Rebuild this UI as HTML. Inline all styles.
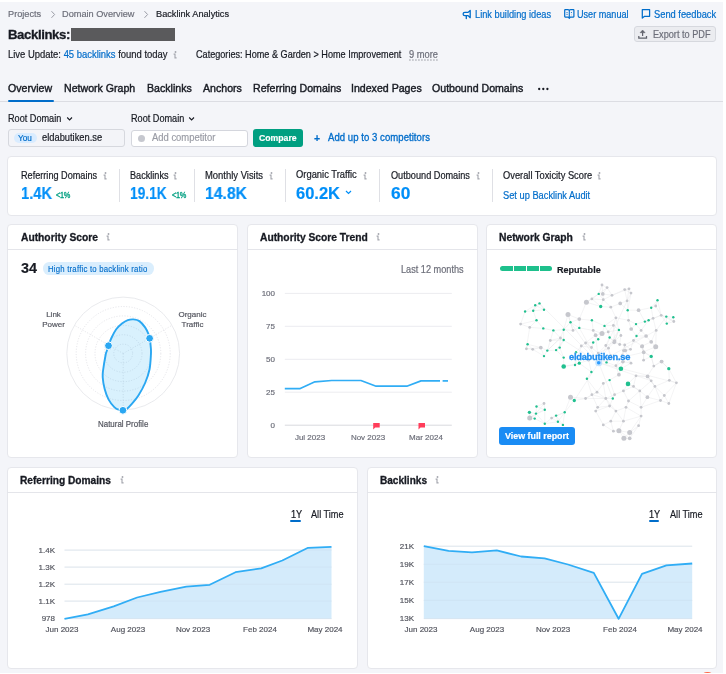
<!DOCTYPE html>
<html><head><meta charset="utf-8"><style>
html,body{margin:0;padding:0;background:#fff;width:726px;height:674px;overflow:hidden;position:relative}
body{font-family:"Liberation Sans",sans-serif;-webkit-font-smoothing:antialiased}
.t{position:absolute;line-height:1;white-space:nowrap;will-change:transform;-webkit-text-stroke-width:0.18px}
.a{position:absolute;overflow:visible}
.card{position:absolute;box-sizing:border-box;background:#fff;border:1px solid #e6e7ec;border-radius:4px}
</style></head><body>
<div style="position:absolute;left:0;top:2px;width:723px;height:671px;background:#f4f5f9"></div>
<div class="t" style="left:8.30px;top:10.00px;font-size:9.20px;color:#6c6e79;font-weight:normal;">Projects</div>
<svg class="a" style="left:50px;top:10px" width="6" height="9"><path d="M1.5 1.2L4.6 4.5L1.5 7.8" stroke="#9a9ca5" stroke-width="1" fill="none"/></svg>
<div class="t" style="left:62.00px;top:10.00px;font-size:9.20px;color:#6c6e79;font-weight:normal;">Domain Overview</div>
<svg class="a" style="left:142.5px;top:10px" width="6" height="9"><path d="M1.5 1.2L4.6 4.5L1.5 7.8" stroke="#9a9ca5" stroke-width="1" fill="none"/></svg>
<div class="t" style="left:155.50px;top:10.00px;font-size:9.20px;color:#171a22;font-weight:normal;">Backlink Analytics</div>
<div class="t" style="left:8.30px;top:28.00px;font-size:13.20px;color:#171a22;font-weight:bold;letter-spacing:-0.4px;-webkit-text-stroke-width:0.3px">Backlinks:</div>
<div style="position:absolute;left:71px;top:28px;width:104px;height:12.5px;background:#5a5a5c"></div>
<div class="t" style="left:8.30px;top:50.00px;font-size:9.45px;color:#171a22;font-weight:normal;;transform:scaleY(1.100);transform-origin:0 8px">Live Update: <span style="color:#006dca">45 backlinks</span> found today</div>
<svg class="a" style="left:173.40px;top:50.60px" width="5" height="8" viewBox="0 0 5 8"><circle cx="2.5" cy="1.0" r="0.95" fill="#a5a7af"/><path d="M0.6 3.1H2.0V6.9H3.6" fill="none" stroke="#a5a7af" stroke-width="1.15"/></svg>
<div class="t" style="left:195.70px;top:51.00px;font-size:9.12px;color:#171a22;font-weight:normal;;transform:scaleY(1.100);transform-origin:0 7px">Categories: Home &amp; Garden &gt; Home Improvement</div>
<div class="t" style="left:408.50px;top:51.00px;font-size:9.30px;color:#6c6e79;font-weight:normal;;transform:scaleY(1.100);transform-origin:0 7px">9 more</div>
<svg class="a" style="left:408.5px;top:59px" width="29" height="2"><path d="M0 1H29" stroke="#8d8f98" stroke-width="0.8" stroke-dasharray="1.8 1.2"/></svg>
<svg class="a" style="left:0;top:0" width="726" height="60"><path d="M470.2 10.4V17.7L468.1 15.6H464.9Q463.1 15.6 463.1 14Q463.1 12.4 464.9 12.4H468.1Z" fill="none" stroke="#006dca" stroke-width="1.3" stroke-linejoin="round"/><path d="M466.3 15.7V18.6" stroke="#006dca" stroke-width="1.35" stroke-linecap="round"/></svg>
<div class="t" style="left:474.70px;top:11.00px;font-size:9.25px;color:#006dca;font-weight:normal;;transform:scaleY(1.100);transform-origin:0 7px">Link building ideas</div>
<svg class="a" style="left:0;top:0" width="726" height="60"><path d="M565.2 9.7H568Q569.3 9.7 569.3 10.6Q569.3 9.7 570.6 9.7H573.4Q573.9 9.7 573.9 10.2V16.6Q573.9 17.1 573.4 17.1H570.2L569.3 18.3L568.4 17.1H565.2Q564.7 17.1 564.7 16.6V10.2Q564.7 9.7 565.2 9.7Z" fill="none" stroke="#006dca" stroke-width="1.2" stroke-linejoin="round"/><path d="M569.3 10.4V17.2" stroke="#006dca" stroke-width="1.1"/><path d="M566.1 12.6H568M566.1 14.4H568" stroke="#006dca" stroke-width="0.7" opacity="0.8"/><circle cx="571.4" cy="12.5" r="0.6" fill="#006dca"/><path d="M571.4 13.8V15.6" stroke="#006dca" stroke-width="0.5" opacity="0.5"/></svg>
<div class="t" style="left:576.90px;top:11.00px;font-size:9.10px;color:#006dca;font-weight:normal;;transform:scaleY(1.100);transform-origin:0 7px">User manual</div>
<svg class="a" style="left:0;top:0" width="726" height="60"><path d="M642.3 9.6H649.6V16.3H644.6L642.3 18.1Z" fill="none" stroke="#006dca" stroke-width="1.25" stroke-linejoin="round"/></svg>
<div class="t" style="left:653.70px;top:11.00px;font-size:9.32px;color:#006dca;font-weight:normal;;transform:scaleY(1.100);transform-origin:0 7px">Send feedback</div>
<div style="position:absolute;left:633.5px;top:25.7px;width:82.4px;height:16.8px;box-sizing:border-box;border:1px solid #d6d8de;border-radius:3px;background:#ebecf0"></div>
<svg class="a" style="left:0;top:0" width="726" height="60"><path d="M642.6 30L640.1 32.7H645.1Z" fill="#5f616b" stroke="#5f616b" stroke-width="0.5" stroke-linejoin="round"/><path d="M642.6 32.4V35.9" stroke="#5f616b" stroke-width="1.2"/><path d="M638.8 36.1V38H646.5V36.1" fill="none" stroke="#5f616b" stroke-width="1.25"/></svg>
<div class="t" style="left:652.80px;top:31.00px;font-size:9.16px;color:#6c6e79;font-weight:normal;;transform:scaleY(1.100);transform-origin:0 7px">Export to PDF</div>
<div class="t" style="left:8.40px;top:83.00px;font-size:10.60px;color:#171a22;font-weight:normal;-webkit-text-stroke:0.4px #171a22">Overview</div>
<div class="t" style="left:63.90px;top:83.00px;font-size:10.60px;color:#171a22;font-weight:normal;-webkit-text-stroke:0.4px #171a22">Network Graph</div>
<div class="t" style="left:146.70px;top:83.00px;font-size:10.60px;color:#171a22;font-weight:normal;-webkit-text-stroke:0.4px #171a22">Backlinks</div>
<div class="t" style="left:202.70px;top:83.00px;font-size:10.60px;color:#171a22;font-weight:normal;-webkit-text-stroke:0.4px #171a22">Anchors</div>
<div class="t" style="left:252.50px;top:83.00px;font-size:10.60px;color:#171a22;font-weight:normal;-webkit-text-stroke:0.4px #171a22">Referring Domains</div>
<div class="t" style="left:351.20px;top:83.00px;font-size:10.60px;color:#171a22;font-weight:normal;-webkit-text-stroke:0.4px #171a22">Indexed Pages</div>
<div class="t" style="left:431.90px;top:83.00px;font-size:10.60px;color:#171a22;font-weight:normal;-webkit-text-stroke:0.4px #171a22">Outbound Domains</div>
<svg class="a" style="left:537px;top:86.5px" width="13" height="4"><circle cx="2.2" cy="2" r="1.15" fill="#171a22"/><circle cx="6.3" cy="2" r="1.15" fill="#171a22"/><circle cx="10.4" cy="2" r="1.15" fill="#171a22"/></svg>
<div style="position:absolute;left:0;top:101px;width:723px;height:1px;background:#dcdde3"></div>
<div style="position:absolute;left:8px;top:99.6px;width:46px;height:2px;background:#006dca;border-radius:1px"></div>
<div class="t" style="left:8.40px;top:115.00px;font-size:9.15px;color:#171a22;font-weight:normal;;transform:scaleY(1.100);transform-origin:0 7px">Root Domain</div>
<svg class="a" style="left:65.5px;top:115.5px" width="8" height="6"><path d="M1.2 1.5L3.6 3.9L6 1.5" stroke="#171a22" stroke-width="1.1" fill="none"/></svg>
<div class="t" style="left:131.00px;top:115.00px;font-size:9.15px;color:#171a22;font-weight:normal;;transform:scaleY(1.100);transform-origin:0 7px">Root Domain</div>
<svg class="a" style="left:188px;top:115.5px" width="8" height="6"><path d="M1.2 1.5L3.6 3.9L6 1.5" stroke="#171a22" stroke-width="1.1" fill="none"/></svg>
<div style="position:absolute;left:8.2px;top:129px;width:116.8px;height:17.5px;box-sizing:border-box;border:1px solid #d6d8de;border-radius:3px;background:#f3f4f8"></div>
<div style="position:absolute;left:13.7px;top:133.2px;width:23.3px;height:9.5px;border-radius:5px;background:#d9ecff"></div>
<div class="t" style="left:17.50px;top:135.00px;font-size:8.20px;color:#006dca;font-weight:normal;;transform:scaleY(1.100);transform-origin:0 6px">You</div>
<div class="t" style="left:42.30px;top:134.00px;font-size:9.33px;color:#171a22;font-weight:normal;;transform:scaleY(1.100);transform-origin:0 7px">eldabutiken.se</div>
<div style="position:absolute;left:130.5px;top:129.5px;width:117px;height:17px;box-sizing:border-box;border:1px solid #d4d6dd;border-radius:3px;background:#fff"></div>
<div style="position:absolute;left:137.5px;top:134.5px;width:7px;height:7px;border-radius:50%;background:#c6c8cf"></div>
<div class="t" style="left:152.00px;top:133.00px;font-size:9.43px;color:#9a9ca5;font-weight:normal;;transform:scaleY(1.100);transform-origin:0 8px">Add competitor</div>
<div style="position:absolute;left:253px;top:129.3px;width:49.8px;height:17.3px;border-radius:3px;background:#009f81"></div>
<div class="t" style="left:259.30px;top:134.00px;font-size:8.70px;color:#fff;font-weight:bold;">Compare</div>
<div class="t" style="left:313.80px;top:133.00px;font-size:10.50px;color:#006dca;font-weight:bold;">+</div>
<div class="t" style="left:328.00px;top:133.00px;font-size:9.55px;color:#006dca;font-weight:normal;-webkit-text-stroke:0.3px #006dca;letter-spacing:0.05px;transform:scaleY(1.100);transform-origin:0 8px">Add up to 3 competitors</div>
<div class="card" style="left:7px;top:156px;width:710px;height:60px"></div>
<div class="t" style="left:20.70px;top:172.00px;font-size:9.15px;color:#171a22;font-weight:normal;;transform:scaleY(1.100);transform-origin:0 7px">Referring Domains</div>
<svg class="a" style="left:102.60px;top:171.90px" width="5" height="8" viewBox="0 0 5 8"><circle cx="2.5" cy="1.0" r="0.95" fill="#a5a7af"/><path d="M0.6 3.1H2.0V6.9H3.6" fill="none" stroke="#a5a7af" stroke-width="1.15"/></svg>
<div class="t" style="left:20.70px;top:184.92px;font-size:16.50px;color:#008ff8;font-weight:bold;transform:scaleX(0.8896);transform-origin:0 0">1.4K</div>
<div class="t" style="left:130.00px;top:172.00px;font-size:9.15px;color:#171a22;font-weight:normal;;transform:scaleY(1.100);transform-origin:0 7px">Backlinks</div>
<svg class="a" style="left:172.90px;top:171.90px" width="5" height="8" viewBox="0 0 5 8"><circle cx="2.5" cy="1.0" r="0.95" fill="#a5a7af"/><path d="M0.6 3.1H2.0V6.9H3.6" fill="none" stroke="#a5a7af" stroke-width="1.15"/></svg>
<div class="t" style="left:130.00px;top:184.92px;font-size:16.50px;color:#008ff8;font-weight:bold;transform:scaleX(0.8337);transform-origin:0 0">19.1K</div>
<div class="t" style="left:204.60px;top:171.00px;font-size:9.45px;color:#171a22;font-weight:normal;;transform:scaleY(1.100);transform-origin:0 8px">Monthly Visits</div>
<svg class="a" style="left:268.60px;top:171.90px" width="5" height="8" viewBox="0 0 5 8"><circle cx="2.5" cy="1.0" r="0.95" fill="#a5a7af"/><path d="M0.6 3.1H2.0V6.9H3.6" fill="none" stroke="#a5a7af" stroke-width="1.15"/></svg>
<div class="t" style="left:204.60px;top:184.92px;font-size:16.50px;color:#008ff8;font-weight:bold;transform:scaleX(0.9541);transform-origin:0 0">14.8K</div>
<div class="t" style="left:296.00px;top:171.00px;font-size:9.38px;color:#171a22;font-weight:normal;;transform:scaleY(1.100);transform-origin:0 8px">Organic Traffic</div>
<svg class="a" style="left:362.90px;top:171.90px" width="5" height="8" viewBox="0 0 5 8"><circle cx="2.5" cy="1.0" r="0.95" fill="#a5a7af"/><path d="M0.6 3.1H2.0V6.9H3.6" fill="none" stroke="#a5a7af" stroke-width="1.15"/></svg>
<div class="t" style="left:296.00px;top:184.92px;font-size:16.50px;color:#008ff8;font-weight:bold;transform:scaleX(0.9995);transform-origin:0 0">60.2K</div>
<div class="t" style="left:390.70px;top:172.00px;font-size:9.17px;color:#171a22;font-weight:normal;;transform:scaleY(1.100);transform-origin:0 7px">Outbound Domains</div>
<svg class="a" style="left:475.90px;top:171.90px" width="5" height="8" viewBox="0 0 5 8"><circle cx="2.5" cy="1.0" r="0.95" fill="#a5a7af"/><path d="M0.6 3.1H2.0V6.9H3.6" fill="none" stroke="#a5a7af" stroke-width="1.15"/></svg>
<div class="t" style="left:390.70px;top:184.92px;font-size:16.50px;color:#008ff8;font-weight:bold;transform:scaleX(1.0519);transform-origin:0 0">60</div>
<div style="position:absolute;left:119.2px;top:169px;width:1px;height:32.5px;background:#dfe0e5"></div>
<div style="position:absolute;left:194.2px;top:169px;width:1px;height:32.5px;background:#dfe0e5"></div>
<div style="position:absolute;left:285.2px;top:169px;width:1px;height:32.5px;background:#dfe0e5"></div>
<div style="position:absolute;left:379.2px;top:169px;width:1px;height:32.5px;background:#dfe0e5"></div>
<div style="position:absolute;left:492.2px;top:169px;width:1px;height:32.5px;background:#dfe0e5"></div>
<div class="t" style="left:56.00px;top:192.00px;font-size:7.40px;color:#009f81;font-weight:normal;-webkit-text-stroke:0.3px #009f81;letter-spacing:-0.35px;transform:scaleY(1.100);transform-origin:0 6px">&lt;1%</div>
<div class="t" style="left:171.50px;top:192.00px;font-size:7.40px;color:#009f81;font-weight:normal;-webkit-text-stroke:0.3px #009f81;letter-spacing:-0.35px;transform:scaleY(1.100);transform-origin:0 6px">&lt;1%</div>
<svg class="a" style="left:344.5px;top:190px" width="7" height="5"><path d="M1 1L3.5 3.5L6 1" stroke="#008ff8" stroke-width="1.2" fill="none"/></svg>
<div class="t" style="left:503.00px;top:172.00px;font-size:9.30px;color:#171a22;font-weight:normal;;transform:scaleY(1.100);transform-origin:0 7px">Overall Toxicity Score</div>
<svg class="a" style="left:597.40px;top:171.90px" width="5" height="8" viewBox="0 0 5 8"><circle cx="2.5" cy="1.0" r="0.95" fill="#a5a7af"/><path d="M0.6 3.1H2.0V6.9H3.6" fill="none" stroke="#a5a7af" stroke-width="1.15"/></svg>
<div class="t" style="left:503.00px;top:192.00px;font-size:9.29px;color:#006dca;font-weight:normal;;transform:scaleY(1.100);transform-origin:0 7px">Set up Backlink Audit</div>
<div class="card" style="left:7px;top:224px;width:231px;height:234px"></div>
<div style="position:absolute;left:7px;top:249.0px;width:231px;height:1px;background:#e4e5ea"></div>
<div class="t" style="left:20.60px;top:233.00px;font-size:10.27px;color:#171a22;font-weight:bold;-webkit-text-stroke:0.3px #171a22">Authority Score</div>
<svg class="a" style="left:106.40px;top:233.10px" width="5" height="8" viewBox="0 0 5 8"><circle cx="2.5" cy="1.0" r="0.95" fill="#a5a7af"/><path d="M0.6 3.1H2.0V6.9H3.6" fill="none" stroke="#a5a7af" stroke-width="1.15"/></svg>
<div class="card" style="left:247px;top:224px;width:231px;height:234px"></div>
<div style="position:absolute;left:247px;top:249.0px;width:231px;height:1px;background:#e4e5ea"></div>
<div class="t" style="left:260.20px;top:233.00px;font-size:10.27px;color:#171a22;font-weight:bold;-webkit-text-stroke:0.3px #171a22">Authority Score Trend</div>
<svg class="a" style="left:376.40px;top:233.10px" width="5" height="8" viewBox="0 0 5 8"><circle cx="2.5" cy="1.0" r="0.95" fill="#a5a7af"/><path d="M0.6 3.1H2.0V6.9H3.6" fill="none" stroke="#a5a7af" stroke-width="1.15"/></svg>
<div class="card" style="left:486px;top:224px;width:231px;height:234px"></div>
<div style="position:absolute;left:486px;top:249.0px;width:231px;height:1px;background:#e4e5ea"></div>
<div class="t" style="left:499.40px;top:233.00px;font-size:10.30px;color:#171a22;font-weight:bold;-webkit-text-stroke:0.3px #171a22">Network Graph</div>
<svg class="a" style="left:581.90px;top:233.10px" width="5" height="8" viewBox="0 0 5 8"><circle cx="2.5" cy="1.0" r="0.95" fill="#a5a7af"/><path d="M0.6 3.1H2.0V6.9H3.6" fill="none" stroke="#a5a7af" stroke-width="1.15"/></svg>
<div class="card" style="left:7px;top:467px;width:351px;height:202px"></div>
<div style="position:absolute;left:7px;top:492.0px;width:351px;height:1px;background:#e4e5ea"></div>
<div class="t" style="left:20.30px;top:476.00px;font-size:10.17px;color:#171a22;font-weight:bold;-webkit-text-stroke:0.3px #171a22">Referring Domains</div>
<svg class="a" style="left:119.90px;top:476.10px" width="5" height="8" viewBox="0 0 5 8"><circle cx="2.5" cy="1.0" r="0.95" fill="#a5a7af"/><path d="M0.6 3.1H2.0V6.9H3.6" fill="none" stroke="#a5a7af" stroke-width="1.15"/></svg>
<div class="card" style="left:367px;top:467px;width:350px;height:202px"></div>
<div style="position:absolute;left:367px;top:492.0px;width:350px;height:1px;background:#e4e5ea"></div>
<div class="t" style="left:379.50px;top:476.00px;font-size:10.07px;color:#171a22;font-weight:bold;-webkit-text-stroke:0.3px #171a22">Backlinks</div>
<svg class="a" style="left:435.40px;top:476.10px" width="5" height="8" viewBox="0 0 5 8"><circle cx="2.5" cy="1.0" r="0.95" fill="#a5a7af"/><path d="M0.6 3.1H2.0V6.9H3.6" fill="none" stroke="#a5a7af" stroke-width="1.15"/></svg>
<div class="t" style="left:21.00px;top:261.00px;font-size:14.40px;color:#171a22;font-weight:bold;">34</div>
<div style="position:absolute;left:42.5px;top:262.4px;width:111px;height:12.6px;border-radius:6.3px;background:#daeefd"></div>
<div class="t" style="left:48.00px;top:266.00px;font-size:7.80px;color:#006dca;font-weight:normal;-webkit-text-stroke:0.12px #006dca;letter-spacing:0.2px;transform:scaleY(1.100);transform-origin:0 6px">High traffic to backlink ratio</div>
<svg class="a" style="left:0;top:0" width="726" height="674"><circle cx="123.2" cy="353.5" r="56.4" fill="none" stroke="#e3e4e8" stroke-width="0.8"/><circle cx="123.2" cy="353.5" r="9.4" fill="none" stroke="#d3d4da" stroke-width="0.6" stroke-dasharray="1.1 1.6"/><circle cx="123.2" cy="353.5" r="18.8" fill="none" stroke="#d3d4da" stroke-width="0.6" stroke-dasharray="1.1 1.6"/><circle cx="123.2" cy="353.5" r="28.2" fill="none" stroke="#d3d4da" stroke-width="0.6" stroke-dasharray="1.1 1.6"/><circle cx="123.2" cy="353.5" r="37.6" fill="none" stroke="#d3d4da" stroke-width="0.6" stroke-dasharray="1.1 1.6"/><circle cx="123.2" cy="353.5" r="47.0" fill="none" stroke="#d3d4da" stroke-width="0.6" stroke-dasharray="1.1 1.6"/><path d="M123.2 353.5L74.4 325.3" stroke="#d3d4da" stroke-width="0.6" stroke-dasharray="1.1 1.6"/><path d="M123.2 353.5L172.0 325.3" stroke="#d3d4da" stroke-width="0.6" stroke-dasharray="1.1 1.6"/><path d="M123.2 353.5L123.2 409.9" stroke="#d3d4da" stroke-width="0.6" stroke-dasharray="1.1 1.6"/><path d="M108.50 345.70 C109.30 343.45 110.12 340.73 111.40 338.00 C112.68 335.27 114.43 331.72 116.20 329.30 C117.97 326.88 120.07 325.03 122.00 323.50 C123.93 321.97 125.87 320.78 127.80 320.10 C129.73 319.42 131.67 319.23 133.60 319.40 C135.53 319.57 137.48 319.77 139.40 321.10 C141.32 322.43 143.58 325.23 145.10 327.40 C146.62 329.57 147.72 332.22 148.50 334.10 C149.28 335.98 149.40 336.28 149.80 338.70 C150.20 341.12 150.72 345.88 150.90 348.60 C151.08 351.32 151.13 351.52 150.90 355.00 C150.67 358.48 150.47 364.83 149.50 369.50 C148.53 374.17 146.95 378.67 145.10 383.00 C143.25 387.33 140.65 391.97 138.40 395.50 C136.15 399.03 133.53 401.95 131.60 404.20 C129.67 406.45 128.23 407.97 126.80 409.00 C125.37 410.03 124.28 410.23 123.00 410.40 C121.72 410.57 120.55 410.55 119.10 410.00 C117.65 409.45 116.07 408.87 114.30 407.10 C112.53 405.33 110.12 402.45 108.50 399.40 C106.88 396.35 105.57 392.50 104.60 388.80 C103.63 385.10 102.93 380.42 102.70 377.20 C102.47 373.98 102.72 373.20 103.20 369.50 C103.68 365.80 105.03 358.00 105.60 355.00 C106.17 352.00 106.12 353.05 106.60 351.50 C107.08 349.95 107.70 347.95 108.50 345.70Z" fill="#2bb0f5" fill-opacity="0.18" stroke="#2aa7f2" stroke-width="1.9"/><circle cx="108.5" cy="345.7" r="3.9" fill="#2aa7f2" stroke="#fff" stroke-width="1"/><circle cx="149.6" cy="338.3" r="3.9" fill="#2aa7f2" stroke="#fff" stroke-width="1"/><circle cx="122.9" cy="410.3" r="3.9" fill="#2aa7f2" stroke="#fff" stroke-width="1"/></svg>
<div class="t" style="left:33px;top:309.8px;width:41px;text-align:center;font-size:8px;line-height:10.2px;color:#53555e">Link<br>Power</div>
<div class="t" style="left:172px;top:309.8px;width:41px;text-align:center;font-size:8px;line-height:10.2px;color:#53555e">Organic<br>Traffic</div>
<div class="t" style="left:97.50px;top:421.00px;font-size:7.94px;color:#53555e;font-weight:normal;;transform:scaleY(1.100);transform-origin:0 6px">Natural Profile</div>
<svg class="a" style="left:0;top:0" width="726" height="674"><path d="M284.8 293.4H451.8" stroke="#ececf0" stroke-width="1"/><path d="M284.8 326.3H451.8" stroke="#ececf0" stroke-width="1"/><path d="M284.8 359.3H451.8" stroke="#ececf0" stroke-width="1"/><path d="M284.8 392.2H451.8" stroke="#ececf0" stroke-width="1"/><path d="M284.8 425.2H451.8" stroke="#d8d9de" stroke-width="1"/><path d="M284.8 388.7L299.7 388.7L314.9 381.8L331.7 380.5L360.9 380.5L376.1 386.2L406.8 386.2L421.0 380.9L440.0 380.9" fill="none" stroke="#30adf5" stroke-width="1.7" stroke-linejoin="round"/><path d="M442.6 380.9H448" stroke="#30adf5" stroke-width="1.7"/><path d="M373.2 423.1H379.7V427.6H375.2L373.2 429.5Z" fill="#ff3d5a"/><path d="M418.5 423.1H425.0V427.6H420.5L418.5 429.5Z" fill="#ff3d5a"/></svg>
<div class="t" style="left:244.7px;width:30px;text-align:right;top:290.40px;font-size:8px;color:#6c6e79">100</div>
<div class="t" style="left:244.7px;width:30px;text-align:right;top:323.30px;font-size:8px;color:#6c6e79">75</div>
<div class="t" style="left:244.7px;width:30px;text-align:right;top:356.30px;font-size:8px;color:#6c6e79">50</div>
<div class="t" style="left:244.7px;width:30px;text-align:right;top:389.20px;font-size:8px;color:#6c6e79">25</div>
<div class="t" style="left:244.7px;width:30px;text-align:right;top:422.20px;font-size:8px;color:#6c6e79">0</div>
<div class="t" style="left:401.40px;top:266.00px;font-size:9.17px;color:#6c6e79;font-weight:normal;;transform:scaleY(1.100);transform-origin:0 7px">Last 12 months</div>
<div class="t" style="left:280.2px;width:60px;text-align:center;top:433.50px;font-size:8px;color:#6c6e79">Jul 2023</div>
<div class="t" style="left:337.8px;width:60px;text-align:center;top:433.50px;font-size:8px;color:#6c6e79">Nov 2023</div>
<div class="t" style="left:395.5px;width:60px;text-align:center;top:433.50px;font-size:8px;color:#6c6e79">Mar 2024</div>
<div style="position:absolute;left:499.7px;top:266.2px;width:52.6px;height:5.2px;border-radius:2.6px;background:#1ec08c"></div>
<div style="position:absolute;left:512.9px;top:266px;width:0.8px;height:5.6px;background:#fff"></div>
<div style="position:absolute;left:526.0px;top:266px;width:0.8px;height:5.6px;background:#fff"></div>
<div style="position:absolute;left:539.2px;top:266px;width:0.8px;height:5.6px;background:#fff"></div>
<div class="t" style="left:557.30px;top:266.00px;font-size:9.04px;color:#171a22;font-weight:bold;">Reputable</div>
<svg class="a" style="left:0;top:0" width="726" height="674"><path d="M591.9 298.9L603.3 299.7M543.3 328.4L553.4 330.4M612.8 398.5L605.8 398.5M626.0 407.3L623.4 421.2M615.9 365.7L622.9 361.6M574.3 400.5L564.7 412.3M633.5 386.4L639.8 390.9M568.0 314.5L579.3 319.1M620.9 335.5L619.7 344.5M539.5 303.4L544.0 309.7M644.9 321.6L653.1 318.3M648.6 320.3L641.1 330.4M591.9 320.3L579.3 319.1M624.7 345.0L623.4 350.6M627.7 310.2L620.2 303.4M609.6 380.1L603.3 383.4M655.7 306.0L661.2 315.3M647.4 376.3L636.0 375.8M626.0 407.3L628.5 401.0M646.1 336.0L651.2 341.8M618.9 329.9L615.9 317.8M651.2 341.8L642.3 346.0M651.2 307.7L655.7 306.0M591.4 372.0L588.6 360.2M666.3 316.6L673.3 317.3M600.7 306.5L591.9 298.9M603.3 424.9L595.7 411.1M612.8 398.5L609.6 406.0M534.7 418.6L544.8 423.7M622.2 355.1L623.4 350.6M581.3 346.0L591.5 347.5M593.2 342.5L591.5 347.5M626.0 407.3L641.1 416.1M614.6 394.7L605.8 398.5M609.6 337.5L614.6 341.0M604.5 325.9L608.2 331.9M636.5 336.0L631.2 329.0M618.9 329.9L620.9 335.5M624.7 289.6L631.0 293.1M597.0 392.2L585.6 398.5M539.5 303.4L533.2 310.8M629.0 288.8L627.1 300.8M606.5 362.4L598.2 353.1M593.2 342.5L585.6 343.0M575.0 365.0L563.7 366.5M610.8 355.6L608.5 348.2M603.3 383.4L597.0 392.2M622.2 355.1L631.0 363.2M557.9 421.7L551.6 418.1M651.2 307.7L638.6 310.2M654.9 386.4L669.3 380.3M600.7 306.5L586.4 302.2M603.3 424.9L610.8 421.2M628.0 383.9L623.4 390.9M651.2 356.4L655.7 346.8M629.7 432.5L629.7 438.3M609.6 380.1L618.9 374.7M629.7 438.3L638.6 425.7M535.2 305.2L539.5 303.4M655.7 346.8L643.6 351.8M624.7 289.6L629.0 288.8M647.4 397.2L641.1 407.3M615.9 411.1L610.8 421.2M576.0 352.3L575.0 365.0M575.0 365.0L579.3 363.2M603.3 299.7L610.8 307.2M598.2 353.1L591.5 347.5M619.7 344.5L614.2 342.3M610.8 307.2L620.2 303.4M613.4 325.4L615.9 317.8M639.8 390.9L647.4 397.2M636.5 336.0L633.5 340.5M556.1 350.1L563.7 357.6M598.7 293.9L602.8 293.9M563.7 329.7L570.5 322.3M597.7 407.3L595.7 411.1M651.2 380.8L647.6 376.4M570.5 322.3L579.3 319.1M602.0 333.4L595.6 335.2M647.4 397.2L654.9 386.4M560.4 338.0L550.3 340.5M602.8 293.9L603.3 299.7M536.5 406.5L536.0 413.6M605.8 345.5L614.2 342.3M661.2 361.4L653.8 366.1M598.7 293.9L602.0 285.0M597.7 407.3L605.8 398.5M553.4 330.4L550.3 340.5M570.5 397.2L585.6 398.5M615.9 411.1L623.4 421.2M553.4 330.4L563.7 329.7M673.3 317.3L673.8 321.5M536.5 320.3L529.7 327.4M540.8 347.6L526.4 348.8M651.2 356.4L643.7 352.3M527.6 344.3L532.7 349.3M563.7 340.0L560.4 338.0M570.5 322.3L568.0 314.5M520.6 324.1L529.7 327.4M602.0 333.4L608.2 331.9M556.1 415.6L557.9 421.7M536.0 413.6L529.7 417.9M533.2 310.8L536.5 320.3M630.5 349.3L623.4 350.6M579.3 363.2L588.6 360.2M644.9 321.6L638.6 310.2M627.7 310.2L628.5 320.3M529.4 412.3L536.0 413.6M605.8 345.5L608.5 348.2M673.3 317.3L666.8 323.6M636.0 324.1L641.1 330.4M598.7 293.9L603.3 299.7M664.3 395.5L660.5 400.5M553.4 330.4L560.4 338.0M646.1 336.0L656.2 330.4M661.2 315.3L653.1 318.3M544.8 423.7L557.9 421.7M609.6 337.5L614.2 342.3M628.0 383.9L639.8 390.9M603.3 424.9L613.4 431.2M604.5 325.9L613.4 325.4M557.9 421.7L562.9 424.9M598.2 353.1L605.8 345.5M624.7 345.0L625.2 350.5M547.3 350.6L556.1 350.1M536.5 320.3L520.6 324.1M540.8 347.6L532.7 349.3M527.6 344.3L540.8 347.6M556.1 350.1L559.7 347.6M586.9 378.8L591.9 394.7M579.3 363.2L591.4 372.0M623.4 350.6L625.2 350.5M620.9 368.7L622.9 361.6M654.9 386.4L651.2 380.8M536.0 413.6L544.0 403.5M533.2 310.8L544.0 309.7M643.6 351.8L643.6 360.2M618.9 430.7L629.7 438.3M622.2 355.1L625.2 350.5M668.8 368.7L661.2 361.4M666.8 323.6L661.2 315.3M668.8 368.7L676.4 382.8M631.0 363.2L622.9 361.6M657.5 300.2L655.7 306.0M598.2 339.2L595.6 335.2M646.1 336.0L641.1 330.4M664.3 395.5L676.4 382.8M563.7 357.6L563.7 366.5M607.1 287.6L612.0 295.3M570.5 322.3L573.0 330.4M648.6 320.3L653.1 318.3M624.7 345.0L633.5 340.5M647.4 376.3L651.2 380.8M604.5 325.9L602.0 333.4M624.7 345.0L619.7 344.5M631.0 293.1L627.1 300.8M615.9 365.7L618.9 374.7M629.0 288.8L631.0 293.1M591.9 394.7L585.6 398.5M525.1 311.5L533.2 310.8M642.3 346.0L643.7 352.3M642.3 346.0L641.9 346.5M579.3 363.2L563.7 366.5M618.9 430.7L629.7 432.5M636.5 336.0L646.1 336.0M570.5 322.3L579.3 327.9M597.0 392.2L605.8 398.5M618.9 329.9L608.2 331.9M614.6 341.0L614.2 342.3M676.4 382.8L668.8 403.5M644.9 321.6L648.6 320.3M591.9 394.7L597.7 407.3M623.4 390.9L628.5 401.0M588.6 360.2L598.2 353.1M654.9 386.4L664.3 395.5M609.6 406.0L595.7 411.1M636.0 375.8L647.6 376.4M628.0 383.9L636.0 375.8M585.6 343.0L591.5 347.5M618.9 430.7L623.9 438.3M613.4 431.2L610.8 421.2M608.5 348.2L614.2 342.3M609.6 406.0L597.7 407.3M564.7 412.3L562.9 424.9M647.4 397.2L660.5 400.5M614.6 341.0L619.7 344.5M536.0 413.6L544.8 409.8M609.6 406.0L605.8 398.5M525.1 311.5L520.6 324.1M606.5 362.4L610.8 355.6M600.7 306.5L610.8 307.2M563.7 340.0L559.7 347.6M651.2 356.4L643.6 351.8M607.1 287.6L602.8 293.9M666.3 316.6L673.8 321.5M535.2 305.2L544.0 309.7M563.7 329.7L563.7 340.0M593.2 342.5L598.2 339.2M559.7 347.6L563.7 357.6M643.7 352.3L641.9 346.5M579.3 327.9L579.3 319.1M657.5 300.2L661.2 315.3M606.5 362.4L615.9 365.7M636.0 324.1L644.9 321.6M627.7 310.2L638.6 310.2M641.1 407.3L628.5 401.0M630.5 349.3L625.2 350.5M666.3 316.6L661.2 315.3M614.6 394.7L623.4 390.9M626.0 407.3L615.9 411.1M536.5 406.5L544.0 403.5M643.6 351.8L643.7 352.3M613.4 325.4L608.2 331.9M620.2 303.4L627.1 300.8M614.6 341.0L620.9 335.5M547.3 350.6L540.8 347.6M564.7 412.3L557.9 421.7M636.0 324.1L631.2 329.0M624.7 345.0L630.5 349.3M610.8 355.6L605.8 345.5M647.4 376.3L654.9 386.4M600.7 306.5L603.3 299.7M563.7 329.7L560.4 338.0M556.1 415.6L551.6 418.1M613.4 431.2L618.9 430.7M641.1 407.3L641.1 416.1M529.4 412.3L534.7 418.6M666.8 323.6L673.8 321.5M623.4 421.2L610.8 421.2M543.3 328.4L529.7 327.4M535.2 305.2L533.2 310.8M574.3 400.5L570.5 397.2M643.6 360.2L643.7 352.3M532.7 349.3L526.4 348.8M668.8 368.7L661.7 361.6M574.3 400.5L585.6 398.5M536.0 413.6L534.7 418.6M612.8 398.5L614.6 394.7M630.5 349.3L633.5 340.5M544.8 423.7L551.6 418.1M651.2 356.4L643.6 360.2M597.0 392.2L591.9 394.7M591.4 372.0L586.9 378.8M636.0 324.1L628.5 320.3M598.7 293.9L591.9 298.9M544.0 356.1L532.7 349.3M593.2 330.4L595.6 335.2M651.2 341.8L656.2 330.4M628.0 383.9L633.5 386.4M544.8 409.8L544.0 403.5M653.8 366.1L661.7 361.6M624.7 289.6L627.1 300.8M563.7 329.7L573.0 330.4M629.7 432.5L638.6 425.7M618.9 329.9L613.4 325.4M534.7 418.6L529.7 417.9M642.3 346.0L643.6 351.8M636.5 336.0L641.1 330.4M586.9 378.8L597.0 392.2M535.2 305.2L525.1 311.5M576.0 352.3L579.3 363.2M581.3 346.0L585.6 343.0M559.7 347.6L560.4 338.0M591.9 320.3L593.2 330.4M603.3 383.4L605.8 398.5M668.8 368.7L669.3 380.3M623.9 438.3L629.7 438.3M598.2 353.1L608.5 348.2M627.7 310.2L627.1 300.8M651.2 356.4L653.8 366.1M633.5 386.4L623.4 390.9M598.7 293.9L586.4 302.2M664.3 395.5L668.8 403.5M591.9 320.3L604.5 325.9M544.0 356.1L540.8 347.6M669.3 380.3L676.4 382.8M620.9 368.7L618.9 374.7M638.6 425.7L641.1 416.1M579.3 327.9L573.0 330.4M651.2 307.7L653.1 318.3M536.5 406.5L544.8 409.8M628.5 320.3L631.2 329.0M598.2 339.2L602.0 333.4M661.2 361.4L661.7 361.6M651.2 307.7L657.5 300.2M556.1 415.6L564.7 412.3M654.9 386.4L647.6 376.4M547.3 350.6L544.0 356.1M623.9 438.3L629.7 432.5M602.0 285.0L607.1 287.6M527.6 344.3L526.4 348.8M633.5 386.4L636.0 375.8M610.8 307.2L615.9 317.8M620.9 368.7L631.0 363.2M547.3 350.6L550.3 340.5M556.1 415.6L562.9 424.9M609.6 337.5L608.2 331.9M564.7 412.3L570.5 397.2M660.5 400.5L668.8 403.5M647.4 376.3L647.6 376.4M622.2 355.1L622.9 361.6M618.9 430.7L623.4 421.2M602.8 293.9L612.0 295.3M656.2 330.4L653.1 318.3M602.0 285.0L602.8 293.9M563.7 329.7L568.0 314.5M609.6 380.1L614.6 394.7M576.0 352.3L581.3 346.0M643.6 351.8L641.9 346.5M603.3 299.7L612.0 295.3M651.2 341.8L655.7 346.8M602.0 333.4L593.2 330.4M529.4 412.3L529.7 417.9M609.6 337.5L605.8 345.5M666.3 316.6L666.8 323.6M620.9 368.7L615.9 365.7M609.6 406.0L615.9 411.1M586.4 302.2L591.9 298.9M536.5 320.3L543.3 328.4M642.3 346.0L633.5 340.5M639.8 390.9L641.1 407.3M579.3 327.9L593.2 330.4M615.9 317.8L628.5 320.3M581.3 346.0L595.6 335.2M604.5 325.9L615.9 317.8M564.7 412.3L551.6 418.1M666.3 316.6L656.2 330.4M660.5 400.5L654.9 386.4M607.1 287.6L598.7 293.9M661.2 315.3L648.6 320.3M618.9 329.9L614.2 342.3M556.1 350.1L563.7 340.0M625.2 350.5L631.0 363.2M641.1 416.1L623.4 421.2M605.8 398.5L615.9 411.1M639.8 390.9L628.5 401.0M544.8 423.7L536.0 413.6M651.2 380.8L639.8 390.9M579.3 319.1L586.4 302.2M575.0 365.0L581.3 346.0M547.3 350.6L560.4 338.0M613.4 325.4L614.6 341.0M651.2 356.4L653.8 366.1M585.6 398.5L605.8 398.5M622.9 361.6L623.4 350.6M647.4 376.3L653.8 366.1M656.2 330.4L655.7 346.8M627.7 310.2L631.0 293.1M618.9 329.9L614.2 342.3M544.8 409.8L544.8 423.7M550.3 340.5L563.7 340.0M646.1 336.0L633.5 340.5M641.1 416.1L629.7 432.5M526.4 348.8L529.7 327.4M629.0 288.8L612.0 295.3M624.7 289.6L612.0 295.3M605.8 398.5L591.9 394.7M573.0 330.4L568.0 314.5M622.2 355.1L615.9 365.7M529.7 417.9L544.8 409.8M673.8 321.5L661.2 315.3M547.3 350.6L560.4 338.0M660.5 400.5L641.1 407.3M622.2 355.1L624.7 345.0M598.7 362.7L539.5 303.4M598.7 362.7L570.5 322.3M598.7 362.7L579.3 327.9M598.7 362.7L618.9 329.9M598.7 362.7L612.8 398.5M598.7 362.7L574.3 400.5M598.7 362.7L646.1 336.0M598.7 362.7L676.4 382.8M598.7 362.7L560.4 338.0M598.7 362.7L651.2 380.8M598.7 362.7L627.1 300.8M598.7 362.7L595.6 335.2M598.7 362.7L643.7 352.3" stroke="#e2e3e7" stroke-width="0.4" fill="none"/>
<circle cx="598.7" cy="293.9" r="1.20" fill="#20c08f"/>
<circle cx="600.7" cy="306.5" r="1.65" fill="#20c08f"/>
<circle cx="535.2" cy="305.2" r="1.20" fill="#20c08f"/>
<circle cx="539.5" cy="303.4" r="1.20" fill="#20c08f"/>
<circle cx="525.1" cy="311.5" r="1.20" fill="#20c08f"/>
<circle cx="533.2" cy="310.8" r="1.20" fill="#20c08f"/>
<circle cx="544.0" cy="309.7" r="1.20" fill="#20c08f"/>
<circle cx="536.5" cy="320.3" r="1.20" fill="#20c08f"/>
<circle cx="543.3" cy="328.4" r="1.20" fill="#20c08f"/>
<circle cx="553.4" cy="330.4" r="1.20" fill="#20c08f"/>
<circle cx="563.7" cy="329.7" r="1.20" fill="#20c08f"/>
<circle cx="570.5" cy="322.3" r="1.20" fill="#20c08f"/>
<circle cx="579.3" cy="327.9" r="1.20" fill="#20c08f"/>
<circle cx="591.9" cy="320.3" r="1.20" fill="#20c08f"/>
<circle cx="604.5" cy="325.9" r="1.20" fill="#20c08f"/>
<circle cx="618.9" cy="329.9" r="1.20" fill="#20c08f"/>
<circle cx="627.7" cy="310.2" r="1.20" fill="#20c08f"/>
<circle cx="636.0" cy="324.1" r="1.20" fill="#20c08f"/>
<circle cx="644.9" cy="321.6" r="1.20" fill="#20c08f"/>
<circle cx="648.6" cy="320.3" r="1.20" fill="#20c08f"/>
<circle cx="651.2" cy="307.7" r="1.20" fill="#20c08f"/>
<circle cx="657.5" cy="300.2" r="1.20" fill="#20c08f"/>
<circle cx="666.3" cy="316.6" r="1.20" fill="#20c08f"/>
<circle cx="673.3" cy="317.3" r="1.20" fill="#20c08f"/>
<circle cx="666.8" cy="323.6" r="1.20" fill="#20c08f"/>
<circle cx="593.2" cy="342.5" r="1.20" fill="#20c08f"/>
<circle cx="598.2" cy="339.2" r="1.20" fill="#20c08f"/>
<circle cx="609.6" cy="337.5" r="1.20" fill="#20c08f"/>
<circle cx="563.7" cy="340.0" r="1.20" fill="#20c08f"/>
<circle cx="527.6" cy="344.3" r="1.20" fill="#20c08f"/>
<circle cx="547.3" cy="350.6" r="1.20" fill="#20c08f"/>
<circle cx="556.1" cy="350.1" r="1.20" fill="#20c08f"/>
<circle cx="559.7" cy="347.6" r="1.20" fill="#20c08f"/>
<circle cx="544.0" cy="356.1" r="1.20" fill="#20c08f"/>
<circle cx="563.7" cy="357.6" r="1.20" fill="#20c08f"/>
<circle cx="576.0" cy="352.3" r="1.20" fill="#20c08f"/>
<circle cx="575.0" cy="365.0" r="1.20" fill="#20c08f"/>
<circle cx="579.3" cy="363.2" r="1.65" fill="#20c08f"/>
<circle cx="563.7" cy="366.5" r="2.30" fill="#20c08f"/>
<circle cx="591.4" cy="372.0" r="1.20" fill="#20c08f"/>
<circle cx="586.9" cy="378.8" r="1.20" fill="#20c08f"/>
<circle cx="606.5" cy="362.4" r="1.20" fill="#20c08f"/>
<circle cx="620.9" cy="368.7" r="2.30" fill="#20c08f"/>
<circle cx="609.6" cy="380.1" r="1.20" fill="#20c08f"/>
<circle cx="628.0" cy="383.9" r="2.30" fill="#20c08f"/>
<circle cx="612.8" cy="398.5" r="1.20" fill="#20c08f"/>
<circle cx="651.2" cy="356.4" r="1.65" fill="#20c08f"/>
<circle cx="668.8" cy="368.7" r="1.65" fill="#20c08f"/>
<circle cx="574.3" cy="400.5" r="1.65" fill="#20c08f"/>
<circle cx="536.5" cy="406.5" r="1.20" fill="#20c08f"/>
<circle cx="529.4" cy="412.3" r="1.65" fill="#20c08f"/>
<circle cx="536.0" cy="413.6" r="1.20" fill="#20c08f"/>
<circle cx="544.8" cy="409.8" r="1.20" fill="#20c08f"/>
<circle cx="556.1" cy="415.6" r="1.20" fill="#20c08f"/>
<circle cx="564.7" cy="412.3" r="1.20" fill="#20c08f"/>
<circle cx="534.7" cy="418.6" r="1.20" fill="#20c08f"/>
<circle cx="544.8" cy="423.7" r="1.20" fill="#20c08f"/>
<circle cx="557.9" cy="421.7" r="1.20" fill="#20c08f"/>
<circle cx="562.9" cy="424.9" r="1.20" fill="#20c08f"/>
<circle cx="636.5" cy="336.0" r="1.20" fill="#20c08f"/>
<circle cx="602.0" cy="285.0" r="1.40" fill="#c6c7cd"/>
<circle cx="607.1" cy="287.6" r="1.40" fill="#c6c7cd"/>
<circle cx="624.7" cy="289.6" r="1.40" fill="#c6c7cd"/>
<circle cx="629.0" cy="288.8" r="1.40" fill="#c6c7cd"/>
<circle cx="631.0" cy="293.1" r="1.40" fill="#c6c7cd"/>
<circle cx="602.8" cy="293.9" r="1.85" fill="#c6c7cd"/>
<circle cx="586.4" cy="302.2" r="2.50" fill="#c6c7cd"/>
<circle cx="591.9" cy="298.9" r="1.40" fill="#c6c7cd"/>
<circle cx="603.3" cy="299.7" r="1.40" fill="#c6c7cd"/>
<circle cx="610.8" cy="307.2" r="1.40" fill="#c6c7cd"/>
<circle cx="620.2" cy="303.4" r="1.85" fill="#c6c7cd"/>
<circle cx="638.6" cy="310.2" r="1.85" fill="#c6c7cd"/>
<circle cx="655.7" cy="306.0" r="1.40" fill="#c6c7cd"/>
<circle cx="568.0" cy="314.5" r="2.50" fill="#c6c7cd"/>
<circle cx="579.3" cy="319.1" r="1.85" fill="#c6c7cd"/>
<circle cx="520.6" cy="324.1" r="1.40" fill="#c6c7cd"/>
<circle cx="529.7" cy="327.4" r="1.40" fill="#c6c7cd"/>
<circle cx="602.0" cy="333.4" r="2.50" fill="#c6c7cd"/>
<circle cx="613.4" cy="325.4" r="1.40" fill="#c6c7cd"/>
<circle cx="614.6" cy="341.0" r="1.85" fill="#c6c7cd"/>
<circle cx="646.1" cy="336.0" r="1.85" fill="#c6c7cd"/>
<circle cx="651.2" cy="341.8" r="1.85" fill="#c6c7cd"/>
<circle cx="642.3" cy="346.0" r="1.85" fill="#c6c7cd"/>
<circle cx="655.7" cy="346.8" r="2.50" fill="#c6c7cd"/>
<circle cx="624.7" cy="345.0" r="1.40" fill="#c6c7cd"/>
<circle cx="630.5" cy="349.3" r="1.40" fill="#c6c7cd"/>
<circle cx="643.6" cy="351.8" r="1.40" fill="#c6c7cd"/>
<circle cx="622.2" cy="355.1" r="1.40" fill="#c6c7cd"/>
<circle cx="661.2" cy="361.4" r="1.40" fill="#c6c7cd"/>
<circle cx="643.6" cy="360.2" r="1.40" fill="#c6c7cd"/>
<circle cx="540.8" cy="347.6" r="1.85" fill="#c6c7cd"/>
<circle cx="532.7" cy="349.3" r="1.40" fill="#c6c7cd"/>
<circle cx="526.4" cy="348.8" r="1.40" fill="#c6c7cd"/>
<circle cx="581.3" cy="346.0" r="1.40" fill="#c6c7cd"/>
<circle cx="588.6" cy="360.2" r="1.40" fill="#c6c7cd"/>
<circle cx="647.4" cy="376.3" r="1.40" fill="#c6c7cd"/>
<circle cx="603.3" cy="383.4" r="1.40" fill="#c6c7cd"/>
<circle cx="614.6" cy="394.7" r="1.40" fill="#c6c7cd"/>
<circle cx="597.0" cy="392.2" r="1.40" fill="#c6c7cd"/>
<circle cx="591.9" cy="394.7" r="1.40" fill="#c6c7cd"/>
<circle cx="633.5" cy="386.4" r="1.40" fill="#c6c7cd"/>
<circle cx="639.8" cy="390.9" r="1.40" fill="#c6c7cd"/>
<circle cx="647.4" cy="397.2" r="1.85" fill="#c6c7cd"/>
<circle cx="654.9" cy="386.4" r="1.40" fill="#c6c7cd"/>
<circle cx="664.3" cy="395.5" r="1.40" fill="#c6c7cd"/>
<circle cx="669.3" cy="380.3" r="1.40" fill="#c6c7cd"/>
<circle cx="676.4" cy="382.8" r="1.40" fill="#c6c7cd"/>
<circle cx="660.5" cy="400.5" r="1.40" fill="#c6c7cd"/>
<circle cx="641.1" cy="407.3" r="1.40" fill="#c6c7cd"/>
<circle cx="626.0" cy="407.3" r="1.40" fill="#c6c7cd"/>
<circle cx="609.6" cy="406.0" r="1.40" fill="#c6c7cd"/>
<circle cx="597.7" cy="407.3" r="1.40" fill="#c6c7cd"/>
<circle cx="570.5" cy="397.2" r="2.50" fill="#c6c7cd"/>
<circle cx="544.0" cy="403.5" r="1.40" fill="#c6c7cd"/>
<circle cx="529.7" cy="417.9" r="2.50" fill="#c6c7cd"/>
<circle cx="551.6" cy="418.1" r="1.40" fill="#c6c7cd"/>
<circle cx="603.3" cy="424.9" r="1.40" fill="#c6c7cd"/>
<circle cx="613.4" cy="431.2" r="1.40" fill="#c6c7cd"/>
<circle cx="618.9" cy="430.7" r="2.50" fill="#c6c7cd"/>
<circle cx="623.9" cy="438.3" r="2.50" fill="#c6c7cd"/>
<circle cx="629.7" cy="432.5" r="2.50" fill="#c6c7cd"/>
<circle cx="629.7" cy="438.3" r="1.85" fill="#c6c7cd"/>
<circle cx="638.6" cy="425.7" r="1.40" fill="#c6c7cd"/>
<circle cx="668.8" cy="403.5" r="1.40" fill="#c6c7cd"/>
<circle cx="610.8" cy="355.6" r="1.40" fill="#c6c7cd"/>
<circle cx="623.4" cy="350.6" r="1.40" fill="#c6c7cd"/>
<circle cx="598.2" cy="353.1" r="1.40" fill="#c6c7cd"/>
<circle cx="585.6" cy="343.0" r="1.40" fill="#c6c7cd"/>
<circle cx="615.9" cy="365.7" r="1.40" fill="#c6c7cd"/>
<circle cx="631.0" cy="363.2" r="1.40" fill="#c6c7cd"/>
<circle cx="605.8" cy="345.5" r="1.40" fill="#c6c7cd"/>
<circle cx="593.2" cy="330.4" r="1.40" fill="#c6c7cd"/>
<circle cx="620.9" cy="335.5" r="1.40" fill="#c6c7cd"/>
<circle cx="633.5" cy="340.5" r="1.40" fill="#c6c7cd"/>
<circle cx="573.0" cy="330.4" r="1.40" fill="#c6c7cd"/>
<circle cx="560.4" cy="338.0" r="1.40" fill="#c6c7cd"/>
<circle cx="550.3" cy="340.5" r="1.40" fill="#c6c7cd"/>
<circle cx="615.9" cy="317.8" r="1.40" fill="#c6c7cd"/>
<circle cx="628.5" cy="320.3" r="1.40" fill="#c6c7cd"/>
<circle cx="641.1" cy="330.4" r="1.40" fill="#c6c7cd"/>
<circle cx="656.2" cy="330.4" r="1.40" fill="#c6c7cd"/>
<circle cx="661.2" cy="315.3" r="1.40" fill="#c6c7cd"/>
<circle cx="651.2" cy="380.8" r="1.40" fill="#c6c7cd"/>
<circle cx="636.0" cy="375.8" r="1.40" fill="#c6c7cd"/>
<circle cx="623.4" cy="390.9" r="1.40" fill="#c6c7cd"/>
<circle cx="628.5" cy="401.0" r="1.40" fill="#c6c7cd"/>
<circle cx="615.9" cy="411.1" r="1.40" fill="#c6c7cd"/>
<circle cx="605.8" cy="398.5" r="1.40" fill="#c6c7cd"/>
<circle cx="585.6" cy="398.5" r="1.40" fill="#c6c7cd"/>
<circle cx="641.1" cy="416.1" r="1.40" fill="#c6c7cd"/>
<circle cx="623.4" cy="421.2" r="1.40" fill="#c6c7cd"/>
<circle cx="610.8" cy="421.2" r="1.40" fill="#c6c7cd"/>
<circle cx="595.7" cy="411.1" r="1.40" fill="#c6c7cd"/>
<circle cx="612.0" cy="295.3" r="1.40" fill="#c6c7cd"/>
<circle cx="627.1" cy="300.8" r="1.40" fill="#c6c7cd"/>
<circle cx="673.8" cy="321.5" r="1.40" fill="#c6c7cd"/>
<circle cx="653.1" cy="318.3" r="1.40" fill="#c6c7cd"/>
<circle cx="631.2" cy="329.0" r="1.85" fill="#c6c7cd"/>
<circle cx="608.2" cy="331.9" r="1.40" fill="#c6c7cd"/>
<circle cx="595.6" cy="335.2" r="1.85" fill="#c6c7cd"/>
<circle cx="619.7" cy="344.5" r="1.40" fill="#c6c7cd"/>
<circle cx="625.2" cy="350.5" r="1.85" fill="#c6c7cd"/>
<circle cx="643.7" cy="352.3" r="1.85" fill="#c6c7cd"/>
<circle cx="622.9" cy="361.6" r="1.85" fill="#c6c7cd"/>
<circle cx="653.8" cy="366.1" r="1.40" fill="#c6c7cd"/>
<circle cx="661.7" cy="361.6" r="1.85" fill="#c6c7cd"/>
<circle cx="618.9" cy="374.7" r="1.85" fill="#c6c7cd"/>
<circle cx="647.6" cy="376.4" r="1.85" fill="#c6c7cd"/>
<circle cx="591.5" cy="347.5" r="1.40" fill="#c6c7cd"/>
<circle cx="608.5" cy="348.2" r="1.40" fill="#c6c7cd"/>
<circle cx="614.2" cy="342.3" r="1.85" fill="#c6c7cd"/>
<circle cx="641.9" cy="346.5" r="1.85" fill="#c6c7cd"/>
<circle cx="598.7" cy="362.7" r="3.5" fill="#9fd3ff" opacity="0.6"/><circle cx="598.7" cy="362.7" r="1.8" fill="#2b9bff"/></svg>
<div class="t" style="left:568.5px;top:353.13px;font-size:9.3px;color:#1f8ef1;font-weight:bold;letter-spacing:-0.25px;-webkit-text-stroke-width:0.3px;text-shadow:0 0 2px #fff,0 0 2px #fff">eldabutiken.se</div>
<div style="position:absolute;left:499px;top:427.2px;width:76px;height:17.5px;border-radius:3px;background:#1a8cf4"></div>
<div class="t" style="left:505.40px;top:432.00px;font-size:8.88px;color:#fff;font-weight:bold;">View full report</div>
<svg class="a" style="left:0;top:0" width="726" height="674"><path d="M64.5 550.1H331.5" stroke="#e6e7eb" stroke-width="0.8"/><path d="M64.5 567.1H331.5" stroke="#e6e7eb" stroke-width="0.8"/><path d="M64.5 584.2H331.5" stroke="#e6e7eb" stroke-width="0.8"/><path d="M64.5 601.1H331.5" stroke="#e6e7eb" stroke-width="0.8"/><path d="M64.5 618.6H331.5" stroke="#e6e7eb" stroke-width="0.8"/><path d="M64.5 618.6L64.5 618.8L87.9 614.3L113.7 606.4L137.1 597.5L160.5 591.8L186.3 586.7L209.7 584.8L235.5 572.2L261.2 568.4L282.3 560.5L308.0 547.8L331.5 546.9L331.5 618.6Z" fill="#d4ebfb"/><path d="M64.5 550.1H331.5" stroke="#c9dcea" stroke-opacity="0.5" stroke-width="0.8"/><path d="M64.5 567.1H331.5" stroke="#c9dcea" stroke-opacity="0.5" stroke-width="0.8"/><path d="M64.5 584.2H331.5" stroke="#c9dcea" stroke-opacity="0.5" stroke-width="0.8"/><path d="M64.5 601.1H331.5" stroke="#c9dcea" stroke-opacity="0.5" stroke-width="0.8"/><path d="M64.5 618.6H331.5" stroke="#c9dcea" stroke-opacity="0.5" stroke-width="0.8"/><path d="M64.5 618.8L87.9 614.3L113.7 606.4L137.1 597.5L160.5 591.8L186.3 586.7L209.7 584.8L235.5 572.2L261.2 568.4L282.3 560.5L308.0 547.8L331.5 546.9" fill="none" stroke="#30adf5" stroke-width="1.8" stroke-linejoin="round"/></svg>
<div class="t" style="left:15.0px;width:40px;text-align:right;top:546.90px;font-size:8px;color:#53555e">1.4K</div>
<div class="t" style="left:15.0px;width:40px;text-align:right;top:563.90px;font-size:8px;color:#53555e">1.3K</div>
<div class="t" style="left:15.0px;width:40px;text-align:right;top:581.00px;font-size:8px;color:#53555e">1.2K</div>
<div class="t" style="left:15.0px;width:40px;text-align:right;top:597.90px;font-size:8px;color:#53555e">1.1K</div>
<div class="t" style="left:15.0px;width:40px;text-align:right;top:615.40px;font-size:8px;color:#53555e">978</div>
<div class="t" style="left:32.2px;width:60px;text-align:center;top:626.30px;font-size:8px;color:#53555e">Jun 2023</div>
<div class="t" style="left:97.7px;width:60px;text-align:center;top:626.30px;font-size:8px;color:#53555e">Aug 2023</div>
<div class="t" style="left:163.3px;width:60px;text-align:center;top:626.30px;font-size:8px;color:#53555e">Nov 2023</div>
<div class="t" style="left:229.8px;width:60px;text-align:center;top:626.30px;font-size:8px;color:#53555e">Feb 2024</div>
<div class="t" style="left:295.4px;width:60px;text-align:center;top:626.30px;font-size:8px;color:#53555e">May 2024</div>
<svg class="a" style="left:0;top:0" width="726" height="674"><path d="M423.8 546.2H692.2" stroke="#e6e7eb" stroke-width="0.8"/><path d="M423.8 564.3H692.2" stroke="#e6e7eb" stroke-width="0.8"/><path d="M423.8 582.2H692.2" stroke="#e6e7eb" stroke-width="0.8"/><path d="M423.8 600.4H692.2" stroke="#e6e7eb" stroke-width="0.8"/><path d="M423.8 618.6H692.2" stroke="#e6e7eb" stroke-width="0.8"/><path d="M423.8 618.6L423.8 546.2L448.6 550.9L472.0 552.3L496.8 550.4L521.2 556.5L544.6 558.4L568.0 564.5L593.8 572.9L618.6 618.8L642.0 573.8L666.4 565.4L692.2 563.5L692.2 618.6Z" fill="#d4ebfb"/><path d="M423.8 546.2H692.2" stroke="#c9dcea" stroke-opacity="0.5" stroke-width="0.8"/><path d="M423.8 564.3H692.2" stroke="#c9dcea" stroke-opacity="0.5" stroke-width="0.8"/><path d="M423.8 582.2H692.2" stroke="#c9dcea" stroke-opacity="0.5" stroke-width="0.8"/><path d="M423.8 600.4H692.2" stroke="#c9dcea" stroke-opacity="0.5" stroke-width="0.8"/><path d="M423.8 618.6H692.2" stroke="#c9dcea" stroke-opacity="0.5" stroke-width="0.8"/><path d="M423.8 546.2L448.6 550.9L472.0 552.3L496.8 550.4L521.2 556.5L544.6 558.4L568.0 564.5L593.8 572.9L618.6 618.8L642.0 573.8L666.4 565.4L692.2 563.5" fill="none" stroke="#30adf5" stroke-width="1.8" stroke-linejoin="round"/></svg>
<div class="t" style="left:374.4px;width:40px;text-align:right;top:543.00px;font-size:8px;color:#53555e">21K</div>
<div class="t" style="left:374.4px;width:40px;text-align:right;top:561.10px;font-size:8px;color:#53555e">19K</div>
<div class="t" style="left:374.4px;width:40px;text-align:right;top:579.00px;font-size:8px;color:#53555e">17K</div>
<div class="t" style="left:374.4px;width:40px;text-align:right;top:597.20px;font-size:8px;color:#53555e">15K</div>
<div class="t" style="left:374.4px;width:40px;text-align:right;top:615.40px;font-size:8px;color:#53555e">13K</div>
<div class="t" style="left:391.4px;width:60px;text-align:center;top:626.30px;font-size:8px;color:#53555e">Jun 2023</div>
<div class="t" style="left:457.0px;width:60px;text-align:center;top:626.30px;font-size:8px;color:#53555e">Aug 2023</div>
<div class="t" style="left:523.0px;width:60px;text-align:center;top:626.30px;font-size:8px;color:#53555e">Nov 2023</div>
<div class="t" style="left:589.6px;width:60px;text-align:center;top:626.30px;font-size:8px;color:#53555e">Feb 2024</div>
<div class="t" style="left:655.1px;width:60px;text-align:center;top:626.30px;font-size:8px;color:#53555e">May 2024</div>
<div class="t" style="left:290.70px;top:511.00px;font-size:9.20px;color:#171a22;font-weight:normal;-webkit-text-stroke:0.2px #171a22;transform:scaleY(1.100);transform-origin:0 7px">1Y</div>
<div style="position:absolute;left:290.4px;top:520.3px;width:10.5px;height:2px;border-radius:1px;background:#006dca"></div>
<div class="t" style="left:311.30px;top:511.00px;font-size:9.18px;color:#171a22;font-weight:normal;-webkit-text-stroke:0.15px #171a22;transform:scaleY(1.100);transform-origin:0 7px">All Time</div>
<div class="t" style="left:649.00px;top:511.00px;font-size:9.20px;color:#171a22;font-weight:normal;-webkit-text-stroke:0.2px #171a22;transform:scaleY(1.100);transform-origin:0 7px">1Y</div>
<div style="position:absolute;left:648.7px;top:520.3px;width:10.5px;height:2px;border-radius:1px;background:#006dca"></div>
<div class="t" style="left:670.10px;top:511.00px;font-size:9.18px;color:#171a22;font-weight:normal;-webkit-text-stroke:0.15px #171a22;transform:scaleY(1.100);transform-origin:0 7px">All Time</div>
<div style="position:absolute;left:703.4px;top:671.6px;width:8.2px;height:6px;border-radius:50%;background:#ff6a4a"></div>
<div style="position:absolute;left:0;top:673px;width:726px;height:1px;background:#fff"></div>
</body></html>
